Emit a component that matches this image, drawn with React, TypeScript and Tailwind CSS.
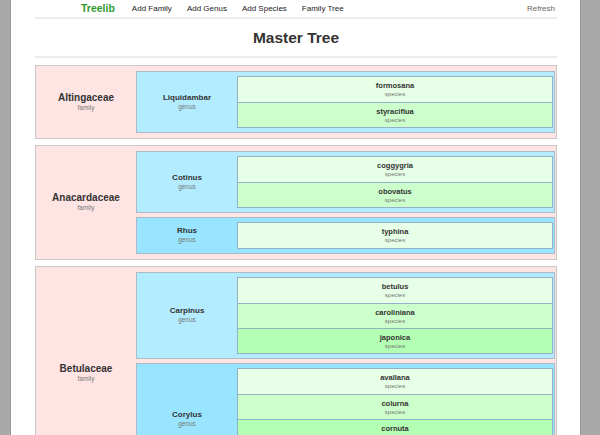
type Species = string;
type Genus = { name: string; species: Species[] };
type Family = { name: string; genera: Genus[] };

const tree: Family[] = [
  { name: "Altingaceae", genera: [{ name: "Liquidambar", species: ["formosana", "styraciflua"] }] },
  {
    name: "Anacardaceae",
    genera: [
      { name: "Cotinus", species: ["coggygria", "obovatus"] },
      { name: "Rhus", species: ["typhina"] },
    ],
  },
  {
    name: "Betulaceae",
    genera: [
      { name: "Carpinus", species: ["betulus", "caroliniana", "japonica"] },
      { name: "Corylus", species: ["avallana", "colurna", "cornuta", "maxima"] },
    ],
  },
];

const genusBg = ["bg-[#b3ecff]", "bg-[#99e5ff]"];
const speciesBg = ["bg-[#e6ffe6]", "bg-[#ccffcc]", "bg-[#b3ffb3]", "bg-[#99ff99]"];

function SpeciesRow({ name, i }: { name: string; i: number }) {
  return (
    <div
      className={`h-[25px] flex flex-col items-center justify-center leading-none ${speciesBg[i % 4]} ${
        i > 0 ? "border-t border-[#93b2c6]" : ""
      }`}
    >
      <span className="text-[7.5px] font-bold text-[#333]">{name}</span>
      <span className="text-[6px] text-[#777] mt-[1.5px]">species</span>
    </div>
  );
}

function GenusBox({ genus, i }: { genus: Genus; i: number }) {
  return (
    <div className={`flex border border-[#a9bcc8] py-[4px] pr-px ${genusBg[i % 2]}`}>
      <div className="w-[100px] shrink-0 flex flex-col items-center justify-center leading-none">
        <span className="text-[8px] font-bold text-[#333]">{genus.name}</span>
        <span className="text-[6.5px] text-[#777] mt-[2px]">genus</span>
      </div>
      <div className="flex-1 border border-[#93b2c6] flex flex-col">
        {genus.species.map((s, j) => (
          <SpeciesRow key={s} name={s} i={j} />
        ))}
      </div>
    </div>
  );
}

function FamilyBox({ family }: { family: Family }) {
  return (
    <div className="flex border border-[#c8c8c8] bg-[#ffe4e4] py-[5px] pr-px">
      <div className="w-[100px] shrink-0 flex flex-col items-center justify-center leading-none">
        <span className="text-[10px] font-bold text-[#333]">{family.name}</span>
        <span className="text-[6.5px] text-[#777] mt-[2px]">family</span>
      </div>
      <div className="flex-1 flex flex-col gap-[4px]">
        {family.genera.map((g, i) => (
          <GenusBox key={g.name} genus={g} i={i} />
        ))}
      </div>
    </div>
  );
}

export default function App() {
  return (
    <div className="h-[435px] overflow-hidden bg-[#a9a9a9] font-['Liberation_Sans',Arial,sans-serif]">
      <div className="ml-[10px] w-[571px] min-h-[435px] bg-white border-x border-[#999]">
        <div className="ml-[24px] w-[522px]">
          <nav className="h-[19px] flex items-center pl-[46px] pr-[2px] border-b-2 border-[#ececec]">
            <span className="text-[10.5px] font-bold text-[#2e9a2e] mr-[17px]">Treelib</span>
            <div className="flex gap-[15px] text-[8px] text-[#222]">
              <span>Add Family</span>
              <span>Add Genus</span>
              <span>Add Species</span>
              <span>Family Tree</span>
            </div>
            <span className="ml-auto text-[8px] text-[#666]">Refresh</span>
          </nav>
          <h1 className="h-[39px] flex items-center justify-center text-[15.5px] font-bold text-[#333] border-b-2 border-[#ececec]">
            Master Tree
          </h1>
          <div className="mt-[7px] flex flex-col gap-[6px]">
            {tree.map((f) => (
              <FamilyBox key={f.name} family={f} />
            ))}
          </div>
        </div>
      </div>
    </div>
  );
}
